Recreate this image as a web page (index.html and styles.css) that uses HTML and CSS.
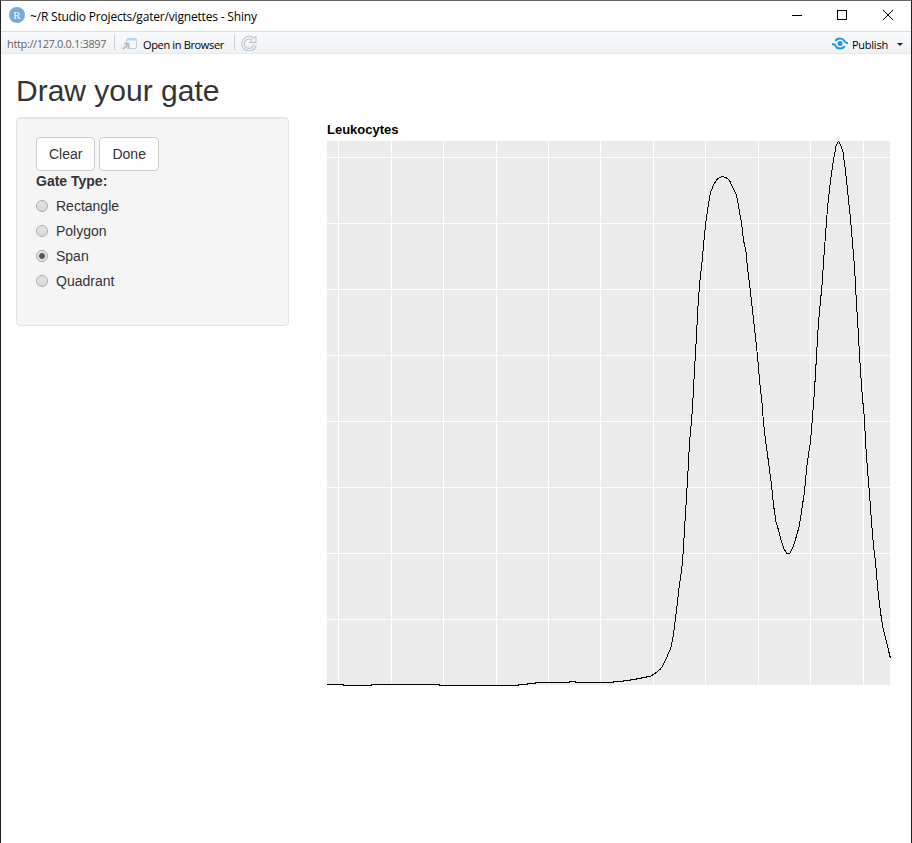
FILE: index.html
```html
<!DOCTYPE html>
<html lang="en">
<head>
<meta charset="utf-8">
<title>~/R Studio Projects/gater/vignettes - Shiny</title>
<link rel="stylesheet" href="styles.css">
</head>
<body>
<div class="window">
  <header class="titlebar">
    <span class="app-icon">R</span>
    <span class="title">~/R Studio Projects/gater/vignettes - Shiny</span>
    <svg class="controls" width="102" height="12" viewBox="0 0 102 12" fill="none" stroke="#000" shape-rendering="crispEdges">
      <path d="M0 6.500h10M45.500 1.500h9v9h-9z"/>
      <path d="M91 1l10 10M101 1l-10 10" shape-rendering="auto"/>
    </svg>
  </header>
  <nav class="toolbar">
    <span class="url">http://127.0.0.1:3897</span>
    <i class="sep"></i>
    <svg class="open-icon" width="16" height="14" viewBox="0 0 16 14">
      <rect x="4.500" y="1.500" width="10" height="10" rx="1.500" fill="#f4f8fb" stroke="#bccfdd"/>
      <path d="M5 2.500h9" stroke="#b5d9ee" stroke-width="2"/>
      <path d="M1 12L5.500 7.500M2 6.500h4.500v4.500" fill="none" stroke="#b0b8c0" stroke-width="1.600"/>
    </svg>
    <span class="open">Open in Browser</span>
    <i class="sep"></i>
    <svg class="reload" width="16" height="16" viewBox="0 0 16 16" fill="none">
      <path d="M12.500 4.500A6 6 0 1 0 14 10" stroke="#b6c1ce" stroke-width="3.600"/>
      <path d="M15 1v6.500H8.500z" fill="#f0f3f6" stroke="#b6c1ce"/>
      <path d="M12.500 4.500A6 6 0 1 0 14 10" stroke="#eef1f5" stroke-width="1.600"/>
    </svg>
    <svg class="publish-icon" width="16" height="14" viewBox="0 0 16 14" fill="none" stroke="#1a9be6" stroke-width="2">
      <path d="M3.500 4C5 .8 10.500 .7 12 3.500C12.800 5.500 13.500 6 16 6M12.500 9C11 12.200 5.500 12.300 4 9.500C3.200 7.500 2.500 7 0 7"/>
      <circle cx="8" cy="6.500" r="2.500" fill="#1a9be6" stroke="none"/>
    </svg>
    <span class="publish">Publish</span>
    <i class="caret"></i>
  </nav>
  <main class="page">
    <h2>Draw your gate</h2>
    <div class="row">
      <form class="well">
        <div class="buttons"><button type="button">Clear</button><button type="button">Done</button></div>
        <strong class="group-label">Gate Type:</strong>
        <label><input type="radio" name="gate">Rectangle</label>
        <label><input type="radio" name="gate">Polygon</label>
        <label><input type="radio" name="gate" checked>Span</label>
        <label><input type="radio" name="gate">Quadrant</label>
      </form>
      <section class="plot">
        <h3>Leukocytes</h3>
        <svg width="564" height="545" viewBox="327 141 564 545" shape-rendering="crispEdges">
          <path d="M327 141h563v544H327z" fill="#ebebeb"/>
          <path d="M338.500 141v544M391.500 141v544M443.500 141v544M496.500 141v544M548.500 141v544M600.500 141v544M653.500 141v544M705.500 141v544M758.500 141v544M810.500 141v544M863.500 141v544M327 157.500h563M327 223.500h563M327 289.500h563M327 355.500h563M327 421.500h563M327 487.500h563M327 553.500h563M327 619.500h563" stroke="#fff" fill="none"/>
          <path d="M327 684.500H343V685.500H371V684.500H439V685.500H518V684.500H527V683.500H535V682.500H569V681.500H575V682.500H613V681.500H623V680.500H630V679.500H636V678.500H641V677.500H646V676.500H650L653.500 674.500 657.500 671.500 660.500 669 662.500 666 664.500 662 666.500 658 668.500 653 670.500 649 671.500 645 672.500 640 673.500 634 674.500 627 675.500 618 676.500 610 677.500 602 678.500 592 679.500 584 680.500 578 682.500 562 683.500 547 684.500 530 685.500 513 686.500 497 687.500 480 688.500 462 689.500 443 690.500 432 691.500 421 692.500 407 693.500 389 694.500 370 695.500 353 696.500 335 697.500 315 698.500 298 699.500 286 700.500 275 702.300 260 703.500 245 705.500 225 707.500 210 710.300 193 713.500 185 716.500 180 719.500 177.500 722.500 176.500 726 177.500 729.500 180.500 732.500 187 736.500 195 738.500 206 741.500 223 743.500 240 746 252 747.500 268 750 288 752.400 310 755 333 757.500 356 759.500 380 762 403 763.500 423 765.500 440 768.500 462 771.500 485 773.500 505 776 522 778.500 530 781 540 784 549 786.500 553 788.500 553.500 790 553 792.600 548 795.300 540 799 527 801.500 512 804.400 492 807 465 810.400 442 812.400 418 814.400 392 816.400 358 818.300 325 820.400 302 822.300 282 823.500 262 825.500 235 827.500 208 830.400 182 832.400 167 834.400 155 836 146 838.500 141.500 840.600 145 843 152 845.400 170 847.500 190 850.400 218 852.400 242 854.400 265 856.400 302 858.300 333 860.400 370 862.400 397 864.400 418 865.600 443 867.400 468 869.400 493 871.400 520 873.400 545 875.500 562 877.400 585 879.400 603 881.600 620 883.400 630 885.600 638 888.400 650 890.500 658.500" fill="none" stroke="#000"/>
        </svg>
      </section>
    </div>
  </main>
</div>
</body>
</html>
```
FILE: styles.css
```css
* { box-sizing: border-box; }
body { margin: 0; background: #fff; color: #333; font-family: "Liberation Sans", Arial, sans-serif; font-size: 14px; }
.window { height: 843px; overflow: hidden; border: solid #222; border-width: 1px 1px 0; border-top-color: #666; }
.titlebar, .toolbar { display: flex; align-items: center; font: 12px "Open Sans", sans-serif; white-space: nowrap; }
.titlebar { height: 30px; padding: 0 17px 2px 8px; color: #000; }
.app-icon { width: 16px; height: 16px; margin-right: 5px; border-radius: 50%; background: #75aadb; color: #fff; text-align: center; font: 11px/16px "Liberation Serif", serif; }
.title { letter-spacing: -.18px; padding-top: 2px; }
.controls { margin-left: auto; }
.toolbar { height: 23px; border: solid #ddd; border-width: 1px 0; border-bottom-color: #e7e9eb; background: linear-gradient(#f9fafb, #eff1f3); padding: 0 8px 0 6px; color: #000; }
.url { color: #666; font-size: 11px; width: 100px; padding-top: 2px; letter-spacing: -.36px; }
.sep { width: 1px; height: 15px; margin: 0 7px; background: #ccd0d4; }
.open-icon { margin-top: 2px; }
.open { margin-left: 5px; margin-right: 3px; padding-top: 3px; font-size: 11px; width: 81px; letter-spacing: -.35px; }
.reload { margin-left: -1px; }
.publish-icon { margin-left: auto; margin-right: 4px; margin-top: 2px; }
.publish { padding-top: 3px; font-size: 11px; width: 36px; letter-spacing: -.25px; }
.caret { border: 3px solid transparent; border-top-color: #222; border-bottom: 0; margin-left: 9px; margin-top: 3px; }
.page { padding: 20px 15px 0; }
h2 { margin: 0; font-size: 30px; line-height: 33px; font-weight: 400; }
.row { display: flex; margin-top: 10px; }
.well { width: 273px; height: 209px; padding: 19px; margin: 0; background: #f5f5f5; border: 1px solid #e3e3e3; border-radius: 4px; box-shadow: inset 0 1px 1px rgba(0,0,0,.05); }
.buttons { display: flex; gap: 4px; }
button { height: 34px; padding: 0 12px; border: 1px solid #ccc; border-radius: 4px; background: #fff; color: #333; font: 14px "Liberation Sans", sans-serif; }
.group-label { display: block; line-height: 20px; margin-bottom: 5px; }
label { display: flex; align-items: center; height: 20px; margin-bottom: 5px; }
input { appearance: none; width: 12px; height: 12px; margin: 0 8px 0 0; border: 1px solid #aaa; border-radius: 50%; background: linear-gradient(#e4e4e4, #dadada); }
input:checked { background: radial-gradient(circle, #555 0 2.500px, #e4e4e4 3.500px); }
.plot { margin-left: 38px; }
h3 { margin: 5px 0 4px; font-size: 13px; line-height: 15px; color: #000; }
.plot svg { display: block; }
```
